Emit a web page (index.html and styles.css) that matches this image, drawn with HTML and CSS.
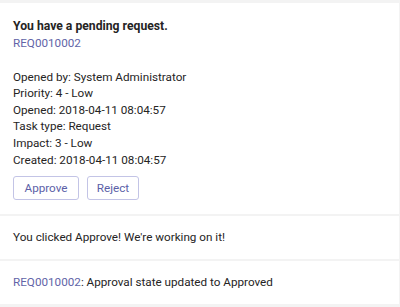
FILE: index.html
```html
<!DOCTYPE html>
<html>
<head>
<meta charset="utf-8">
<link rel="stylesheet" href="styles.css">
</head>
<body>
<div class="feed">
  <div class="card card-main">
    <div class="title">You have a pending request.</div>
    <div class="line"><span class="link">REQ0010002</span></div>
    <div class="details">
      <div class="line">Opened by: System Administrator</div>
      <div class="line">Priority: 4 - Low</div>
      <div class="line">Opened: 2018-04-11 08:04:57</div>
      <div class="line">Task type: Request</div>
      <div class="line">Impact: 3 - Low</div>
      <div class="line">Created: 2018-04-11 08:04:57</div>
    </div>
    <div class="actions">
      <button class="btn btn-approve">Approve</button>
      <button class="btn btn-reject">Reject</button>
    </div>
  </div>
  <div class="card card-msg">
    <div class="line">You clicked Approve! We're working on it!</div>
  </div>
  <div class="card card-msg">
    <div class="line"><span class="link">REQ0010002</span>: Approval state updated to Approved</div>
  </div>
</div>
</body>
</html>
```

FILE: styles.css
```css
html, body {
  margin: 0;
  padding: 0;
  background: #f3f3f3;
}
body {
  font-family: Roboto, "Open Sans", sans-serif;
  font-size: 11.7px;
  color: #252424;
}
.feed {
  display: flex;
  flex-direction: column;
  gap: 2px;
  padding: 3px 1px 0 0;
}
.card {
  background: #ffffff;
  padding: 0 13px;
}
.card-main {
  height: 211px;
  box-sizing: border-box;
  padding-top: 15px;
}
.title {
  font-size: 12.2px;
  font-weight: 700;
  line-height: 16.6px;
}
.line {
  line-height: 16.6px;
}
.link {
  color: #6264a7;
}
.details {
  margin-top: 17.5px;
}
.actions {
  display: flex;
  gap: 8px;
  margin-top: 8px;
}
.btn {
  font-family: inherit;
  font-size: 11.7px;
  color: #5c5fa8;
  background: #fff;
  border: 1px solid #c3c4e6;
  border-radius: 3px;
  height: 24px;
  padding: 0;
}
.btn-approve { width: 66px; }
.btn-reject { width: 52px; }
.card-msg {
  height: 43px;
  display: flex;
  align-items: center;
}
```
